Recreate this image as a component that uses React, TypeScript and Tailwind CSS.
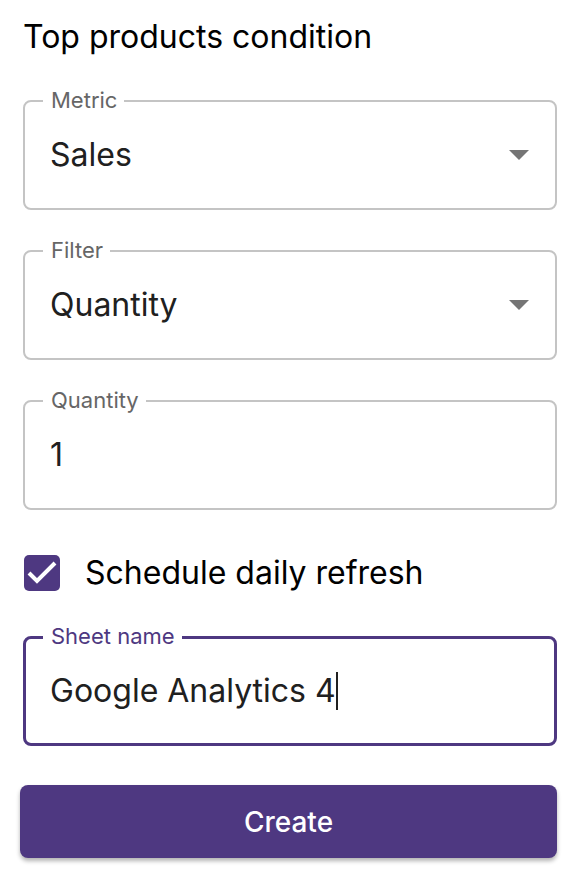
import React from "react";

function Arrow() {
  return (
    <svg width="20" height="10" viewBox="0 0 20 10" className="shrink-0">
      <path d="M0 0 L20 0 L10 10 Z" fill="#757575" />
    </svg>
  );
}

function Field({
  label,
  value,
  select,
  focused,
}: {
  label: string;
  value: string;
  select?: boolean;
  focused?: boolean;
}) {
  return (
    <div
      className={
        "relative h-[110px] rounded-[8px] flex items-center " +
        (focused
          ? "border-[3px] border-[#4e3881] pl-[24px] pr-[25px]"
          : "border-2 border-[#c4c4c4] pl-[25px] pr-[26px]")
      }
    >
      <span
        className={
          "absolute -translate-y-1/2 bg-white pl-[8px] pr-[7px] text-[22px] leading-[26px] " +
          (focused ? "-top-[3px] left-[17px] text-[#4e3881]" : "-top-[2px] left-[18px] text-[#666666]")
        }
      >
        {label}
      </span>
      <span className="flex-1 text-[32px] text-[#202020]">
        {value}
        {focused && <span className="inline-block w-[2px] h-[38px] bg-[#202020] align-middle -mt-[4px]" />}
      </span>
      {select && <Arrow />}
    </div>
  );
}

export default function App() {
  return (
    <div
      className="w-[578px] h-[884px] bg-white px-[23px] pt-[17px]"
      style={{ fontFamily: "Inter, 'Noto Sans', sans-serif" }}
    >
      <h1 className="text-[32px] leading-[40px] text-black">Top products condition</h1>
      <div className="mt-[43px] flex flex-col gap-[40px] w-[534px]">
        <Field label="Metric" value="Sales" select />
        <Field label="Filter" value="Quantity" select />
        <Field label="Quantity" value="1" />
      </div>
      <div className="mt-[45px] h-[36px] flex items-center gap-[25px]">
        <div className="ml-px w-[36px] h-[36px] rounded-[5px] bg-[#4e3881] shrink-0">
          <svg width="36" height="36" viewBox="0 0 36 36">
            <path d="M5 18 L13 26 L31 8" stroke="white" strokeWidth="4" fill="none" />
          </svg>
        </div>
        <span className="text-[32px] leading-[36px] text-black">Schedule daily refresh</span>
      </div>
      <div className="mt-[45px] w-[534px]">
        <Field label="Sheet name" value="Google Analytics 4" focused />
      </div>
      <button className="mt-[39px] w-[537px] -ml-[3px] h-[73px] rounded-[8px] bg-[#4e3881] text-white text-[28px] font-medium shadow-[0_3px_4px_rgba(0,0,0,0.3)]">
        Create
      </button>
    </div>
  );
}
